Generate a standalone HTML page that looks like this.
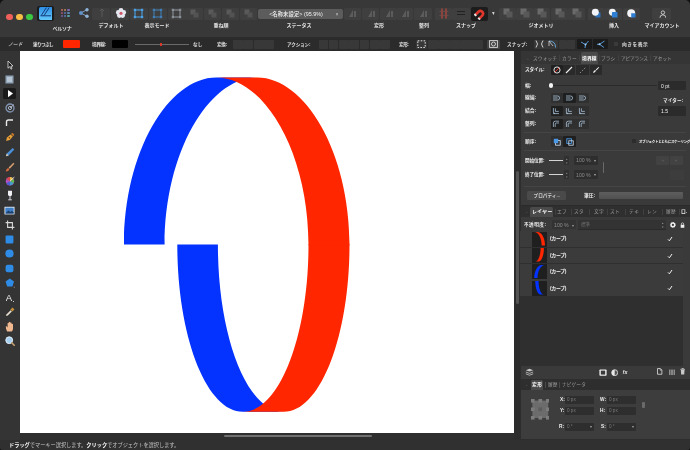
<!DOCTYPE html>
<html lang="ja"><head><meta charset="utf-8"><title>Affinity Designer</title>
<style>
html,body{margin:0;padding:0;background:#111;}
body{width:690px;height:450px;overflow:hidden;position:relative;font-family:"Liberation Sans","Noto Sans CJK JP",sans-serif;}
#app{position:absolute;left:0;top:0;width:690px;height:450px;overflow:hidden;border-radius:5px 5px 3px 3px;}
#app div,#app span,#app svg{position:absolute;display:block;white-space:nowrap;}
#app span{will-change:transform;}
</style></head><body><div id="app">
<div style="left:0px;top:0px;width:690px;height:450px;background:#2d2d2d;"></div>
<div style="left:0px;top:0px;width:690px;height:37px;background:#383838;border-radius:5px 5px 0 0;"></div>
<div style="left:0px;top:37px;width:690px;height:14.2px;background:#2b2b2b;"></div>
<div style="left:0px;top:51.2px;width:19.7px;height:389px;background:#343434;"></div>
<div style="left:19.7px;top:51.2px;width:494.7px;height:382px;background:#ffffff;"></div>
<div style="left:19.7px;top:433.2px;width:494.7px;height:6.3px;background:#2e2e2e;"></div>
<div style="left:224px;top:434.6px;width:148px;height:2.6px;background:#6e6e6e;border-radius:2px;"></div>
<div style="left:514.4px;top:51.2px;width:6.1px;height:388.3px;background:#2c2c2c;"></div>
<div style="left:516.4px;top:170.5px;width:3px;height:133.8px;background:#535353;border-radius:1.5px;"></div>
<div style="left:520.5px;top:51.2px;width:169.5px;height:388.3px;background:#3a3a3a;"></div>
<div style="left:0px;top:439.5px;width:690px;height:10.5px;background:#303030;"></div>
<svg style="left:0;top:0" width="690" height="450" viewBox="0 0 690 450"><path d="M177.30,244.60 C177.30,336.94 206.67,411.80 242.90,411.80 L283.50,411.80 C247.27,411.80 217.90,336.94 217.90,244.60 Z" fill="#0433ff"/><path d="M124.00,244.60 C124.00,152.26 168.28,77.40 216.25,77.40 L256.85,77.40 C208.88,77.40 164.60,152.26 164.60,244.60 Z" fill="#0433ff"/><path d="M308.50,244.60 C308.50,336.94 279.13,411.80 242.90,411.80 L283.90,411.80 C320.13,411.80 349.50,336.94 349.50,244.60 Z" fill="#ff2600"/><path d="M308.50,244.60 C308.50,152.26 264.22,77.40 216.25,77.40 L257.25,77.40 C305.22,77.40 349.50,152.26 349.50,244.60 Z" fill="#ff2600"/><rect x="308.5" y="244" width="41" height="1.2" fill="#ff2600"/></svg>
<div style="left:6.1000000000000005px;top:13.5px;width:6.6px;height:6.6px;background:#f0605a;border-radius:50%;"></div>
<div style="left:16.099999999999998px;top:13.5px;width:6.6px;height:6.6px;background:#f6be45;border-radius:50%;"></div>
<div style="left:26.0px;top:13.5px;width:6.6px;height:6.6px;background:#3cc845;border-radius:50%;"></div>
<div style="left:37px;top:5.6px;width:17.2px;height:15.8px;background:#1b1b1b;border-radius:2px;"></div>
<svg style="left:38.9px;top:6.9px" width="13.6" height="12.9" viewBox="0 0 13.6 12.9"><defs><linearGradient id="adg" x1="0" y1="0" x2="0" y2="1"><stop offset="0" stop-color="#2f8fe6"/><stop offset="1" stop-color="#62c8fa"/></linearGradient></defs><rect x="0" y="0" width="13.6" height="12.9" rx="1.6" fill="url(#adg)"/><path d="M2.2 8.6 L7.4 0.6 M5 8.6 L10.2 0.6 M1.6 8.8 H12" stroke="#123a78" stroke-width="1" fill="none"/></svg>
<div style="left:61px;top:8.6px;width:2.2px;height:2.2px;background:#c86a5a;border-radius:50%;"></div>
<div style="left:64.2px;top:8.6px;width:2.2px;height:2.2px;background:#b7895a;border-radius:50%;"></div>
<div style="left:67.4px;top:8.6px;width:2.2px;height:2.2px;background:#7b6bb0;border-radius:50%;"></div>
<div style="left:61px;top:11.8px;width:2.2px;height:2.2px;background:#a0557d;border-radius:50%;"></div>
<div style="left:64.2px;top:11.8px;width:2.2px;height:2.2px;background:#5d6fb5;border-radius:50%;"></div>
<div style="left:67.4px;top:11.8px;width:2.2px;height:2.2px;background:#5a8bb5;border-radius:50%;"></div>
<div style="left:61px;top:15.0px;width:2.2px;height:2.2px;background:#7a5aa5;border-radius:50%;"></div>
<div style="left:64.2px;top:15.0px;width:2.2px;height:2.2px;background:#5a7ab5;border-radius:50%;"></div>
<div style="left:67.4px;top:15.0px;width:2.2px;height:2.2px;background:#5aa0a5;border-radius:50%;"></div>
<svg style="left:78px;top:7px" width="12" height="12" viewBox="0 0 12 12"><path d="M3 6 L9 2.6 M3 6 L9 9.4" stroke="#7fa3c8" stroke-width="1"/><circle cx="3" cy="6" r="2" fill="#5f90c8"/><circle cx="9" cy="2.8" r="1.7" fill="#8fb4d8"/><circle cx="9" cy="9.2" r="1.7" fill="#8fb4d8"/></svg>
<span style="left:62.050000000000004px;top:24.60px;font-size:5.0px;line-height:7.00px;color:#e6e6e6;font-weight:700;transform:translateX(-50%);letter-spacing:-0.300px;">ペルソナ</span>
<div style="left:92px;top:7.6px;width:18.4px;height:12.2px;background:#3f3f3f;border-radius:1.5px;"></div>
<div style="left:111px;top:7.6px;width:18.4px;height:12.2px;background:#3f3f3f;border-radius:1.5px;"></div>
<svg style="left:96.5px;top:8px" width="10" height="10" viewBox="0 0 10 10"><path d="M5 1 V9 M3 3 L5 1 L7 3" stroke="#5a5a5a" stroke-width="1" fill="none"/></svg>
<svg style="left:114.5px;top:7px" width="12" height="12" viewBox="0 0 12 12"><g fill="#e6e9f2"><circle cx="6" cy="3.3" r="2.4"/><circle cx="3.3" cy="5.5" r="2.4"/><circle cx="8.7" cy="5.5" r="2.4"/><circle cx="4.4" cy="8.6" r="2.4"/><circle cx="7.6" cy="8.6" r="2.4"/></g><circle cx="6" cy="6.3" r="1.6" fill="#d05a6a"/></svg>
<span style="left:111px;top:22.00px;font-size:5.0px;line-height:7.00px;color:#e6e6e6;font-weight:700;transform:translateX(-50%);">デフォルト</span>
<div style="left:129.6px;top:7.6px;width:18.4px;height:12.2px;background:#3f3f3f;border-radius:1.5px;"></div>
<svg style="left:133.29999999999998px;top:7.5px" width="11" height="11" viewBox="0 0 11 11"><rect x="2" y="2" width="7" height="7" fill="none" stroke="#4aa3e8" stroke-width="1.1"/><g fill="#4aa3e8"><rect x="0.8" y="0.8" width="2.2" height="2.2"/><rect x="8" y="0.8" width="2.2" height="2.2"/><rect x="0.8" y="8" width="2.2" height="2.2"/><rect x="8" y="8" width="2.2" height="2.2"/></g></svg>
<div style="left:148.6px;top:7.6px;width:18.4px;height:12.2px;background:#3f3f3f;border-radius:1.5px;"></div>
<svg style="left:152.29999999999998px;top:7.5px" width="11" height="11" viewBox="0 0 11 11"><rect x="2" y="2" width="7" height="7" fill="none" stroke="#3f7fb5" stroke-width="1.1"/><g fill="#3f7fb5"><rect x="0.8" y="0.8" width="2.2" height="2.2"/><rect x="8" y="0.8" width="2.2" height="2.2"/><rect x="0.8" y="8" width="2.2" height="2.2"/><rect x="8" y="8" width="2.2" height="2.2"/></g></svg>
<div style="left:167.6px;top:7.6px;width:18.4px;height:12.2px;background:#3f3f3f;border-radius:1.5px;"></div>
<svg style="left:171.29999999999998px;top:7.5px" width="11" height="11" viewBox="0 0 11 11"><rect x="2" y="2" width="7" height="7" fill="none" stroke="#8a9098" stroke-width="1.1"/><g fill="#8a9098"><rect x="0.8" y="0.8" width="2.2" height="2.2"/><rect x="8" y="0.8" width="2.2" height="2.2"/><rect x="0.8" y="8" width="2.2" height="2.2"/><rect x="8" y="8" width="2.2" height="2.2"/></g></svg>
<span style="left:157px;top:22.00px;font-size:5.0px;line-height:7.00px;color:#e6e6e6;font-weight:700;transform:translateX(-50%);">表示モード</span>
<div style="left:186px;top:7.6px;width:17.2px;height:12.2px;background:#3f3f3f;border-radius:1.5px;"></div>
<svg style="left:190px;top:8.5px" width="9" height="9" viewBox="0 0 9 9"><rect x="0.5" y="0.5" width="5" height="5" fill="#5a5a5a"/><rect x="3.5" y="3.5" width="5" height="5" fill="#535353"/></svg>
<div style="left:204px;top:7.6px;width:17.2px;height:12.2px;background:#3f3f3f;border-radius:1.5px;"></div>
<svg style="left:208px;top:8.5px" width="9" height="9" viewBox="0 0 9 9"><rect x="0.5" y="0.5" width="5" height="5" fill="#5a5a5a"/><rect x="3.5" y="3.5" width="5" height="5" fill="#535353"/></svg>
<div style="left:222px;top:7.6px;width:17.2px;height:12.2px;background:#3f3f3f;border-radius:1.5px;"></div>
<svg style="left:226px;top:8.5px" width="9" height="9" viewBox="0 0 9 9"><rect x="0.5" y="0.5" width="5" height="5" fill="#5a5a5a"/><rect x="3.5" y="3.5" width="5" height="5" fill="#535353"/></svg>
<div style="left:239.5px;top:7.6px;width:17.2px;height:12.2px;background:#3f3f3f;border-radius:1.5px;"></div>
<svg style="left:243.5px;top:8.5px" width="9" height="9" viewBox="0 0 9 9"><rect x="0.5" y="0.5" width="5" height="5" fill="#5a5a5a"/><rect x="3.5" y="3.5" width="5" height="5" fill="#535353"/></svg>
<span style="left:220.6px;top:22.00px;font-size:5.0px;line-height:7.00px;color:#e6e6e6;font-weight:700;transform:translateX(-50%);">重ね順</span>
<div style="left:258px;top:9.4px;width:85px;height:9.4px;background:#5c5c5c;border-radius:2px;"></div>
<span style="left:296px;top:10.92px;font-size:5.4px;line-height:7.56px;color:#f2f2f2;font-weight:500;transform:translateX(-50%);">&lt;名称未設定&gt; (95.9%)</span>
<span style="left:337px;top:11.10px;font-size:5px;line-height:7.00px;color:#c8c8c8;font-weight:400;transform:translateX(-50%);">×</span>
<span style="left:299.4px;top:22.00px;font-size:5.0px;line-height:7.00px;color:#e6e6e6;font-weight:700;transform:translateX(-50%);">ステータス</span>
<div style="left:343.5px;top:7.6px;width:17.4px;height:12.2px;background:#3f3f3f;border-radius:1.5px;"></div>
<svg style="left:348.0px;top:8.5px" width="9" height="9" viewBox="0 0 9 9"><path d="M1 8 L5 1 L5 8 Z M6 2 H8 V8 H6Z" fill="#5c5c5c"/></svg>
<div style="left:362px;top:7.6px;width:17.4px;height:12.2px;background:#3f3f3f;border-radius:1.5px;"></div>
<svg style="left:366.5px;top:8.5px" width="9" height="9" viewBox="0 0 9 9"><path d="M1 8 L5 1 L5 8 Z M6 2 H8 V8 H6Z" fill="#5c5c5c"/></svg>
<div style="left:380px;top:7.6px;width:17.4px;height:12.2px;background:#3f3f3f;border-radius:1.5px;"></div>
<svg style="left:384.5px;top:8.5px" width="9" height="9" viewBox="0 0 9 9"><path d="M1 8 L5 1 L5 8 Z M6 2 H8 V8 H6Z" fill="#5c5c5c"/></svg>
<div style="left:396px;top:7.6px;width:17.4px;height:12.2px;background:#3f3f3f;border-radius:1.5px;"></div>
<svg style="left:400.5px;top:8.5px" width="9" height="9" viewBox="0 0 9 9"><path d="M1 8 L5 1 L5 8 Z M6 2 H8 V8 H6Z" fill="#5c5c5c"/></svg>
<div style="left:414px;top:7.6px;width:18.4px;height:12.2px;background:#3f3f3f;border-radius:1.5px;"></div>
<svg style="left:418.5px;top:8.5px" width="9" height="9" viewBox="0 0 9 9"><path d="M1 8 L5 1 L5 8 Z M6 2 H8 V8 H6Z" fill="#5c5c5c"/></svg>
<span style="left:378.6px;top:22.00px;font-size:5.0px;line-height:7.00px;color:#e6e6e6;font-weight:700;transform:translateX(-50%);">変形</span>
<span style="left:423.8px;top:22.00px;font-size:5.0px;line-height:7.00px;color:#e6e6e6;font-weight:700;transform:translateX(-50%);">整列</span>
<div style="left:434.5px;top:7.6px;width:17.4px;height:12.2px;background:#3f3f3f;border-radius:1.5px;"></div>
<div style="left:452px;top:7.6px;width:17.9px;height:12.2px;background:#3f3f3f;border-radius:1.5px;"></div>
<svg style="left:439px;top:7.6px" width="10" height="11" viewBox="0 0 10 11"><path d="M3 0.5 V10.5 M7 0.5 V10.5" stroke="#d9483b" stroke-width="1"/><path d="M0.5 3.5 H9.5 M0.5 7.5 H9.5" stroke="#7a4a45" stroke-width="0.8"/></svg>
<svg style="left:455.5px;top:9px" width="10" height="8" viewBox="0 0 10 8"><path d="M1 2.5 H9 M1 5.5 H9" stroke="#222" stroke-width="1.2"/></svg>
<div style="left:471.4px;top:7.2px;width:16.2px;height:13.6px;background:#1c1c1c;border-radius:2px;"></div>
<svg style="left:473.6px;top:7.8px" width="12" height="12" viewBox="0 0 13 13"><g transform="rotate(225 6.5 6.5)"><path d="M2.2 2 V7 A4.3 4.3 0 0 0 10.8 7 V2 H8 V7 A1.5 1.5 0 0 1 5 7 V2 Z" fill="#e0362c"/><rect x="2.2" y="1.2" width="2.8" height="2" fill="#e8e8e8"/><rect x="8" y="1.2" width="2.8" height="2" fill="#e8e8e8"/></g></svg>
<span style="left:492.6px;top:10.15px;font-size:5.5px;line-height:7.70px;color:#d0d0d0;font-weight:400;transform:translateX(-50%);">▾</span>
<span style="left:465.8px;top:22.00px;font-size:5.0px;line-height:7.00px;color:#e6e6e6;font-weight:700;transform:translateX(-50%);">スナップ</span>
<div style="left:498.5px;top:7.6px;width:17.0px;height:12.2px;background:#3f3f3f;border-radius:1.5px;"></div>
<svg style="left:502.5px;top:8.2px" width="10" height="10" viewBox="0 0 10 10"><rect x="0.5" y="0.5" width="6" height="6" fill="#6a6a6a"/><rect x="3.5" y="3.5" width="6" height="6" fill="#585858"/></svg>
<div style="left:516px;top:7.6px;width:17.0px;height:12.2px;background:#3f3f3f;border-radius:1.5px;"></div>
<svg style="left:520px;top:8.2px" width="10" height="10" viewBox="0 0 10 10"><rect x="0.5" y="0.5" width="6" height="6" fill="#6a6a6a"/><rect x="3.5" y="3.5" width="6" height="6" fill="#585858"/></svg>
<div style="left:533px;top:7.6px;width:17.0px;height:12.2px;background:#3f3f3f;border-radius:1.5px;"></div>
<svg style="left:537px;top:8.2px" width="10" height="10" viewBox="0 0 10 10"><rect x="0.5" y="0.5" width="6" height="6" fill="#6a6a6a"/><rect x="3.5" y="3.5" width="6" height="6" fill="#585858"/></svg>
<div style="left:550.5px;top:7.6px;width:17.0px;height:12.2px;background:#3f3f3f;border-radius:1.5px;"></div>
<svg style="left:554.5px;top:8.2px" width="10" height="10" viewBox="0 0 10 10"><rect x="0.5" y="0.5" width="6" height="6" fill="#6a6a6a"/><rect x="3.5" y="3.5" width="6" height="6" fill="#585858"/></svg>
<div style="left:568px;top:7.6px;width:17.0px;height:12.2px;background:#3f3f3f;border-radius:1.5px;"></div>
<svg style="left:572px;top:8.2px" width="10" height="10" viewBox="0 0 10 10"><rect x="0.5" y="0.5" width="6" height="6" fill="#6a6a6a"/><rect x="3.5" y="3.5" width="6" height="6" fill="#585858"/></svg>
<span style="left:541px;top:22.00px;font-size:5.0px;line-height:7.00px;color:#e6e6e6;font-weight:700;transform:translateX(-50%);">ジオメトリ</span>
<div style="left:587.5px;top:7.6px;width:17.0px;height:12.2px;background:#3f3f3f;border-radius:1.5px;"></div>
<svg style="left:590.9px;top:8.4px" width="10.4" height="10.4" viewBox="0 0 12 12"><rect x="5" y="5" width="6" height="6" rx="1" fill="#2f6fb5"/><circle cx="5" cy="5" r="4" fill="#f2f4f8"/></svg>
<div style="left:605px;top:7.6px;width:17.0px;height:12.2px;background:#3f3f3f;border-radius:1.5px;"></div>
<svg style="left:608.4px;top:8.4px" width="10.4" height="10.4" viewBox="0 0 12 12"><circle cx="5" cy="5" r="4" fill="#f2f4f8"/><rect x="4.5" y="4.5" width="6.5" height="6.5" rx="1" fill="#2f7fd5"/></svg>
<div style="left:622.5px;top:7.6px;width:17.0px;height:12.2px;background:#3f3f3f;border-radius:1.5px;"></div>
<svg style="left:625.9px;top:8.4px" width="10.4" height="10.4" viewBox="0 0 12 12"><circle cx="6" cy="6" r="4.6" fill="#f2f4f8"/><path d="M6 6 H11 V11 H6 Z" fill="#2f7fd5"/></svg>
<span style="left:613.8px;top:22.00px;font-size:5.0px;line-height:7.00px;color:#e6e6e6;font-weight:700;transform:translateX(-50%);">挿入</span>
<div style="left:652px;top:7.6px;width:19.4px;height:12.2px;background:#3f3f3f;border-radius:1.5px;"></div>
<svg style="left:658.6px;top:10px" width="7.8" height="8.6" viewBox="0 0 10 11"><circle cx="5" cy="3.3" r="2.2" fill="none" stroke="#e8e8e8" stroke-width="1"/><path d="M1.2 10 A3.8 3.8 0 0 1 8.8 10" fill="none" stroke="#e8e8e8" stroke-width="1"/></svg>
<span style="left:662px;top:22.00px;font-size:5.0px;line-height:7.00px;color:#e6e6e6;font-weight:700;transform:translateX(-50%);">マイアカウント</span>
<span style="left:8px;top:41.54px;font-size:4.8px;line-height:6.72px;color:#dcdcdc;font-weight:500;font-style:italic;letter-spacing:0.033px;">ノード</span>
<span style="left:33.3px;top:41.68px;font-size:4.6px;line-height:6.44px;color:#e0e0e0;font-weight:700;letter-spacing:-0.600px;">塗りつぶし</span>
<div style="left:62.8px;top:39.6px;width:17px;height:8.6px;background:#ff2600;border-radius:1px;"></div>
<span style="left:92px;top:41.68px;font-size:4.6px;line-height:6.44px;color:#e0e0e0;font-weight:700;letter-spacing:-0.419px;">境界線:</span>
<div style="left:111.7px;top:39.6px;width:16.2px;height:8.6px;background:#000000;border-radius:1px;"></div>
<div style="left:134.5px;top:43.6px;width:54px;height:1px;background:#6a6a6a;"></div>
<div style="left:160.2px;top:42.6px;width:1.4px;height:3px;background:#d9362b;"></div>
<span style="left:193px;top:41.68px;font-size:4.6px;line-height:6.44px;color:#e0e0e0;font-weight:700;letter-spacing:0.200px;">なし</span>
<span style="left:217px;top:41.68px;font-size:4.6px;line-height:6.44px;color:#e0e0e0;font-weight:700;letter-spacing:-0.259px;">変換:</span>
<div style="left:233px;top:39.6px;width:9.8px;height:9px;background:#383838;border-radius:1px;"></div>
<div style="left:243.4px;top:39.6px;width:9.8px;height:9px;background:#383838;border-radius:1px;"></div>
<div style="left:253.8px;top:39.6px;width:9.8px;height:9px;background:#383838;border-radius:1px;"></div>
<div style="left:264.2px;top:39.6px;width:9.8px;height:9px;background:#383838;border-radius:1px;"></div>
<span style="left:287px;top:41.68px;font-size:4.6px;line-height:6.44px;color:#e0e0e0;font-weight:700;letter-spacing:-0.163px;">アクション:</span>
<div style="left:318.5px;top:39.6px;width:9.7px;height:9px;background:#383838;border-radius:1px;"></div>
<div style="left:328.8px;top:39.6px;width:9.7px;height:9px;background:#383838;border-radius:1px;"></div>
<div style="left:339.1px;top:39.6px;width:9.7px;height:9px;background:#383838;border-radius:1px;"></div>
<div style="left:349.4px;top:39.6px;width:9.7px;height:9px;background:#383838;border-radius:1px;"></div>
<div style="left:359.7px;top:39.6px;width:9.7px;height:9px;background:#383838;border-radius:1px;"></div>
<div style="left:370px;top:39.6px;width:9.7px;height:9px;background:#383838;border-radius:1px;"></div>
<div style="left:380.3px;top:39.6px;width:9.7px;height:9px;background:#383838;border-radius:1px;"></div>
<span style="left:399.4px;top:41.68px;font-size:4.6px;line-height:6.44px;color:#e0e0e0;font-weight:700;letter-spacing:-0.425px;">変形:</span>
<div style="left:416.4px;top:39.6px;width:10.6px;height:9px;background:#383838;border-radius:1px;"></div>
<div style="left:428px;top:39.6px;width:10.6px;height:9px;background:#383838;border-radius:1px;"></div>
<div style="left:439px;top:39.6px;width:10.6px;height:9px;background:#383838;border-radius:1px;"></div>
<div style="left:450px;top:39.6px;width:10.6px;height:9px;background:#383838;border-radius:1px;"></div>
<div style="left:461px;top:39.6px;width:10.6px;height:9px;background:#383838;border-radius:1px;"></div>
<div style="left:472px;top:39.6px;width:10.6px;height:9px;background:#383838;border-radius:1px;"></div>
<svg style="left:417.4px;top:39.9px" width="9" height="8.4" viewBox="0 0 9 8.4"><rect x="0.8" y="0.8" width="7.4" height="6.8" fill="none" stroke="#e0e0e0" stroke-width="1" stroke-dasharray="1.6 1.3"/></svg>
<div style="left:487.4px;top:39.6px;width:12.4px;height:9px;background:#444;border-radius:1px;"></div>
<svg style="left:489.2px;top:40.2px" width="9" height="8" viewBox="0 0 9 8"><rect x="0.6" y="0.6" width="7.8" height="6.8" fill="none" stroke="#d8d8d8" stroke-width="0.9"/><circle cx="4.5" cy="4" r="2" fill="none" stroke="#d8d8d8" stroke-width="0.9"/></svg>
<span style="left:507.3px;top:41.68px;font-size:4.6px;line-height:6.44px;color:#e0e0e0;font-weight:700;letter-spacing:0.105px;">スナップ:</span>
<div style="left:533.5px;top:39.6px;width:12px;height:9px;background:#383838;border-radius:1px;"></div>
<div style="left:546px;top:39.6px;width:12px;height:9px;background:#383838;border-radius:1px;"></div>
<div style="left:558.5px;top:39.6px;width:8px;height:9px;background:#383838;border-radius:1px;"></div>
<div style="left:567px;top:39.6px;width:8px;height:9px;background:#383838;border-radius:1px;"></div>
<svg style="left:535px;top:40.4px" width="9" height="8" viewBox="0 0 9 8"><path d="M1 0.5 Q4 4 1 7.5 M8 0.5 Q5 4 8 7.5" fill="none" stroke="#e0e0e0" stroke-width="0.9"/></svg>
<svg style="left:548px;top:40.4px" width="9" height="8" viewBox="0 0 9 8"><path d="M1 1 Q7.5 1 7.5 7.5" fill="none" stroke="#6fb0e8" stroke-width="0.9"/><path d="M1 1 L5 6 M1 1 L1 6" stroke="#d0d0d0" stroke-width="0.8" fill="none"/></svg>
<div style="left:576.5px;top:39.2px;width:15.4px;height:9.8px;background:#1b1b1b;border-radius:1px;"></div>
<div style="left:592.6px;top:39.2px;width:15.4px;height:9.8px;background:#1b1b1b;border-radius:1px;"></div>
<svg style="left:579.5px;top:40px" width="10" height="8.5" viewBox="0 0 10 8.5"><path d="M1 2 L5.5 4.5 L8.5 1 M5.5 4.5 L5 8" fill="none" stroke="#5fa8ea" stroke-width="0.9"/><circle cx="5.5" cy="4.5" r="1" fill="#9fd0ff"/></svg>
<svg style="left:595.5px;top:40px" width="10" height="8.5" viewBox="0 0 10 8.5"><path d="M8.5 1 L3.5 4.3 L8 7.5 M3.5 4.3 L1 4.3" fill="none" stroke="#5fa8ea" stroke-width="0.9"/><circle cx="3.5" cy="4.3" r="1" fill="#9fd0ff"/></svg>
<div style="left:613.6px;top:42.2px;width:4px;height:4px;background:#3a3a3a;border-radius:0.8px;"></div>
<span style="left:622px;top:41.54px;font-size:4.8px;line-height:6.72px;color:#ededed;font-weight:500;letter-spacing:0.480px;">向きを表示</span>
<div style="left:3.4px;top:88.4px;width:12.4px;height:10.6px;background:#1a1a1a;border-radius:1.5px;"></div>
<svg style="left:5.60px;top:59.70px" width="8" height="10" viewBox="0 0 8 10"><path d="M2 1 L2 8.2 L3.8 6.6 L5 9.2 L6 8.7 L4.9 6.2 L7 6 Z" fill="#1c1c1c" stroke="#e2e2e2" stroke-width="0.8"/></svg>
<svg style="left:5.10px;top:74.75px" width="9" height="9" viewBox="0 0 9 9"><rect x="0.5" y="0.5" width="8" height="8" fill="#8fa3b8"/><rect x="2" y="2" width="5" height="5" fill="#b8c6d4"/></svg>
<svg style="left:5.90px;top:89.30px" width="8" height="9" viewBox="0 0 8 9"><path d="M2 1 L7 4.6 L2 8.2 Z" fill="#ffffff"/></svg>
<svg style="left:4.60px;top:103.35px" width="10" height="10" viewBox="0 0 10 10"><circle cx="5" cy="5" r="4" fill="none" stroke="#8496b4" stroke-width="1.3"/><circle cx="5" cy="5" r="1.6" fill="none" stroke="#a8b4c8" stroke-width="1"/><path d="M5 5 L9 1.5" stroke="#c8d0dc" stroke-width="0.8"/></svg>
<svg style="left:5.10px;top:118.40px" width="9" height="9" viewBox="0 0 9 9"><path d="M1.5 8 V4 Q1.5 2 3.5 2 H8" fill="none" stroke="#e8e8e8" stroke-width="1.4"/></svg>
<svg style="left:4.60px;top:132.45px" width="10" height="10" viewBox="0 0 10 10"><path d="M1 9 L2 5.4 L5.6 2.4 L7.8 4.6 L4.8 8 Z" fill="#e8a23a"/><path d="M6 2 L7.4 0.8 L9.4 2.8 L8.2 4.2 Z" fill="#c87a28"/><circle cx="4.4" cy="5.8" r="0.8" fill="#5a3a10"/></svg>
<svg style="left:4.60px;top:147.00px" width="10" height="10" viewBox="0 0 10 10"><path d="M1 9.2 L1.8 6.6 L7.6 0.9 L9.3 2.6 L3.6 8.4 Z" fill="#4a8fd8"/><path d="M1 9.2 L1.8 6.6 L3.6 8.4 Z" fill="#e8d0b0"/></svg>
<svg style="left:4.60px;top:161.55px" width="10" height="10" viewBox="0 0 10 10"><path d="M0.8 9.4 Q1 6.6 3.2 6 L4.4 7.2 Q3.8 9.4 0.8 9.4 Z" fill="#d86a3a"/><path d="M3.6 5.6 L8.4 0.8 L9.4 1.8 L4.8 6.8 Z" fill="#d8a070"/></svg>
<svg style="left:4.60px;top:176.10px" width="10" height="10" viewBox="0 0 10 10"><circle cx="5" cy="5.2" r="4.2" fill="#b050c0"/><path d="M5 5.2 L5 1 A4.2 4.2 0 0 1 8.6 3.1 Z" fill="#e8c040"/><path d="M5 5.2 L8.6 3.1 A4.2 4.2 0 0 1 8.6 7.3 Z" fill="#60b850"/><path d="M5 5.2 L8.6 7.3 A4.2 4.2 0 0 1 5 9.4 Z" fill="#40a0c8"/><path d="M5 5.2 L5 9.4 A4.2 4.2 0 0 1 1.4 7.3 Z" fill="#4860d0"/><path d="M5 5.2 L1.4 3.1 A4.2 4.2 0 0 1 5 1 Z" fill="#d84848"/><path d="M5 5.2 L9.4 0.8" stroke="#e8e8e8" stroke-width="0.8"/></svg>
<svg style="left:5.60px;top:190.15px" width="8" height="11" viewBox="0 0 8 11"><path d="M2 0.8 H6 V4.6 Q6 6.4 4 6.4 Q2 6.4 2 4.6 Z" fill="#f0f0f4"/><path d="M4 6.4 V9.6 M2.2 9.8 H5.8" stroke="#d8d8e0" stroke-width="1"/></svg>
<svg style="left:4.10px;top:205.70px" width="11" height="9" viewBox="0 0 11 9"><rect x="0.5" y="0.8" width="10" height="7.6" fill="#f0f4f8"/><rect x="1.3" y="1.6" width="8.4" height="6" fill="#3f7fc8"/><path d="M1.3 7.6 L4.4 4.4 L6.4 6 L8 4.8 L9.7 6.4 V7.6 Z" fill="#1c3f6a"/></svg>
<svg style="left:4.60px;top:219.75px" width="10" height="10" viewBox="0 0 10 10"><path d="M2.6 0.6 V7.4 H9.4 M0.6 2.6 H7.4 V9.4" fill="none" stroke="#d8d8d8" stroke-width="1.1"/></svg>
<svg style="left:5.10px;top:234.80px" width="9" height="9" viewBox="0 0 9 9"><rect x="0.6" y="0.6" width="7.8" height="7.8" rx="0.8" fill="#2f8ce6"/></svg>
<svg style="left:5.10px;top:249.35px" width="9" height="9" viewBox="0 0 9 9"><circle cx="4.5" cy="4.5" r="4.1" fill="#2f8ce6"/></svg>
<svg style="left:5.10px;top:263.90px" width="9" height="9" viewBox="0 0 9 9"><rect x="0.6" y="0.8" width="7.8" height="7.4" rx="2" fill="#2f8ce6"/></svg>
<svg style="left:4.60px;top:277.95px" width="10" height="10" viewBox="0 0 10 10"><path d="M4.8 0.6 L9 3.6 L7.4 8.6 H2.2 L0.6 3.6 Z" fill="#2f8ce6"/><path d="M8.4 9.6 L9.6 9.6 L9.6 8.4 Z" fill="#c8c8c8"/></svg>
<span style="left:9.2px;top:291.25px;font-size:9.5px;line-height:13.30px;color:#f0f0f0;font-weight:400;transform:translateX(-50%);font-family:"Liberation Serif",serif;">A</span>
<div style="left:13.2px;top:301.2px;width:1.2px;height:1.2px;background:#c8c8c8;"></div>
<svg style="left:4.60px;top:307.05px" width="10" height="10" viewBox="0 0 10 10"><path d="M1 9 L1.6 7.2 L5.6 3.2 L6.8 4.4 L2.8 8.4 Z" fill="#e8e0d0"/><path d="M5.4 2.6 L7.6 0.6 L9.4 2.4 L7.4 4.6 Z" fill="#c8923a"/></svg>
<svg style="left:4.60px;top:321.10px" width="10" height="11" viewBox="0 0 10 11"><path d="M2.2 10.4 Q0.6 7.4 0.8 5.4 L1.8 5.2 L2.6 6.6 V2.2 Q3.2 1.4 3.8 2.2 V1.2 Q4.5 0.4 5.2 1.2 V1.8 Q5.9 1.1 6.6 1.9 V3 Q7.4 2.4 8 3.2 V7.4 Q8 9.4 6.8 10.4 Z" fill="#f0b890"/></svg>
<svg style="left:4.60px;top:336.15px" width="10" height="10" viewBox="0 0 10 10"><circle cx="4.2" cy="4.2" r="3.4" fill="#a8d0f0" stroke="#e0ecf8" stroke-width="1"/><path d="M6.8 6.8 L9.2 9.2" stroke="#c8a070" stroke-width="1.6" stroke-linecap="round"/></svg>
<span style="left:9.2px;top:440.8px;font-size:5.2px;line-height:8px;color:#c4c4c4;"><b style="color:#ffffff">ドラッグ</b>でマーキー選択します。<b style="color:#ffffff">クリック</b>でオブジェクトを選択します。</span>
<div style="left:520.5px;top:51.2px;width:169.5px;height:12.6px;background:#353535;"></div>
<div style="left:580.5px;top:52.4px;width:17.2px;height:11.4px;background:#4a4a4a;border-radius:1.5px 1.5px 0 0;"></div>
<span style="left:526.5px;top:55.50px;font-size:5px;line-height:7.00px;color:#666;font-weight:400;">◦</span>
<span style="left:532.8px;top:55.71px;font-size:4.7px;line-height:6.58px;color:#9a9a9a;font-weight:400;letter-spacing:0.140px;">スウォッチ</span>
<span style="left:562px;top:55.71px;font-size:4.7px;line-height:6.58px;color:#9a9a9a;font-weight:400;letter-spacing:0.300px;">カラー</span>
<span style="left:581.6px;top:55.64px;font-size:4.8px;line-height:6.72px;color:#ffffff;font-weight:700;letter-spacing:0.133px;">境界線</span>
<span style="left:600.8px;top:55.71px;font-size:4.7px;line-height:6.58px;color:#9a9a9a;font-weight:400;letter-spacing:0.100px;">ブラシ</span>
<span style="left:621px;top:55.71px;font-size:4.7px;line-height:6.58px;color:#9a9a9a;font-weight:400;letter-spacing:-0.200px;">アピアランス</span>
<span style="left:653px;top:55.71px;font-size:4.7px;line-height:6.58px;color:#9a9a9a;font-weight:400;letter-spacing:0.050px;">アセット</span>
<div style="left:559.4px;top:55.4px;width:0.5px;height:6px;background:#404040;"></div>
<div style="left:578.6px;top:55.4px;width:0.5px;height:6px;background:#404040;"></div>
<div style="left:598.8px;top:55.4px;width:0.5px;height:6px;background:#404040;"></div>
<div style="left:618px;top:55.4px;width:0.5px;height:6px;background:#404040;"></div>
<div style="left:650.4px;top:55.4px;width:0.5px;height:6px;background:#404040;"></div>
<span style="left:524.6px;top:67.31px;font-size:4.7px;line-height:6.58px;color:#ececec;font-weight:700;letter-spacing:-0.206px;">スタイル:</span>
<div style="left:550.6px;top:64.6px;width:12.2px;height:10.8px;background:#202020;border-radius:1px;"></div>
<div style="left:563.2px;top:64.6px;width:12.2px;height:10.8px;background:#2a2a2a;border-radius:1px;"></div>
<div style="left:576.4px;top:64.6px;width:12.2px;height:10.8px;background:#2a2a2a;border-radius:1px;"></div>
<div style="left:589.8px;top:64.6px;width:12.2px;height:10.8px;background:#2a2a2a;border-radius:1px;"></div>
<svg style="left:552.6px;top:66px" width="8" height="8" viewBox="0 0 8 8"><circle cx="4" cy="4" r="3.1" fill="none" stroke="#f0f0f0" stroke-width="0.9"/><path d="M1.8 6.2 L6.2 1.8" stroke="#e0362c" stroke-width="1"/></svg>
<svg style="left:565.4px;top:66px" width="8" height="8" viewBox="0 0 8 8"><path d="M1 7 L7 1" stroke="#f0f0f0" stroke-width="1.1"/></svg>
<svg style="left:578.6px;top:66px" width="8" height="8" viewBox="0 0 8 8"><path d="M1 7 L7 1" stroke="#8a8a8a" stroke-width="1" stroke-dasharray="1.5 1.2"/></svg>
<svg style="left:592px;top:66px" width="8" height="8" viewBox="0 0 8 8"><path d="M1 7 Q1.5 4.6 3.2 4 L4 4.8 Q3.4 6.8 1 7 Z M3.8 3.6 L6.6 0.9 L7.2 1.5 L4.4 4.4Z" fill="#f0f0f0"/></svg>
<span style="left:525px;top:82.64px;font-size:4.8px;line-height:6.72px;color:#ececec;font-weight:700;">幅:</span>
<div style="left:551px;top:84.9px;width:106px;height:1px;background:#2a2a2a;"></div>
<div style="left:548.8px;top:83.2px;width:4.4px;height:4.4px;background:#f4f4f4;border-radius:50%;"></div>
<div style="left:658.4px;top:80.6px;width:27.2px;height:9.6px;background:#2b2b2b;border-radius:1px;"></div>
<span style="left:660.8px;top:82.50px;font-size:5px;line-height:7.00px;color:#f0f0f0;font-weight:400;">0 pt</span>
<span style="left:525px;top:95.14px;font-size:4.8px;line-height:6.72px;color:#ececec;font-weight:700;letter-spacing:-0.096px;">線端:</span>
<div style="left:550.6px;top:93px;width:12.2px;height:10px;background:#303030;border-radius:1px;"></div>
<svg style="left:552.4px;top:94px" width="8.6" height="8" viewBox="0 0 8.6 8"><path d="M1 2 H5.6 Q7.6 2 7.6 4 Q7.6 6 5.6 6 H1 M1 4 H5.6" fill="none" stroke="#b8d4ee" stroke-width="0.7"/></svg>
<div style="left:563.4px;top:93px;width:12.2px;height:10px;background:#1f1f1f;border-radius:1px;"></div>
<svg style="left:565.1999999999999px;top:94px" width="8.6" height="8" viewBox="0 0 8.6 8"><path d="M1 2 H5.6 Q7.6 2 7.6 4 Q7.6 6 5.6 6 H1 M1 4 H5.6" fill="none" stroke="#b8d4ee" stroke-width="0.7"/></svg>
<div style="left:576.4px;top:93px;width:12.2px;height:10px;background:#303030;border-radius:1px;"></div>
<svg style="left:578.1999999999999px;top:94px" width="8.6" height="8" viewBox="0 0 8.6 8"><path d="M1 2 H5.6 Q7.6 2 7.6 4 Q7.6 6 5.6 6 H1 M1 4 H5.6" fill="none" stroke="#b8d4ee" stroke-width="0.7"/></svg>
<span style="left:525px;top:107.84px;font-size:4.8px;line-height:6.72px;color:#ececec;font-weight:700;letter-spacing:-0.096px;">結合:</span>
<div style="left:550.6px;top:105.8px;width:12.2px;height:10px;background:#1f1f1f;border-radius:1px;"></div>
<svg style="left:552.4px;top:106.8px" width="8.6" height="8" viewBox="0 0 8.6 8"><path d="M1 6.6 H7 M1.4 1 V5 Q1.4 6.4 3 6.4 M3.4 1.4 V4.4 H6.8" fill="none" stroke="#b8d4ee" stroke-width="0.7"/></svg>
<div style="left:563.4px;top:105.8px;width:12.2px;height:10px;background:#303030;border-radius:1px;"></div>
<svg style="left:565.1999999999999px;top:106.8px" width="8.6" height="8" viewBox="0 0 8.6 8"><path d="M1 6.6 H7 M1.4 1 V5 Q1.4 6.4 3 6.4 M3.4 1.4 V4.4 H6.8" fill="none" stroke="#b8d4ee" stroke-width="0.7"/></svg>
<div style="left:576.4px;top:105.8px;width:12.2px;height:10px;background:#303030;border-radius:1px;"></div>
<svg style="left:578.1999999999999px;top:106.8px" width="8.6" height="8" viewBox="0 0 8.6 8"><path d="M1 6.6 H7 M1.4 1 V5 Q1.4 6.4 3 6.4 M3.4 1.4 V4.4 H6.8" fill="none" stroke="#b8d4ee" stroke-width="0.7"/></svg>
<span style="left:525px;top:120.84px;font-size:4.8px;line-height:6.72px;color:#ececec;font-weight:700;letter-spacing:-0.096px;">整列:</span>
<div style="left:550.6px;top:118.8px;width:12.2px;height:10px;background:#1f1f1f;border-radius:1px;"></div>
<svg style="left:552.4px;top:119.8px" width="8.6" height="8" viewBox="0 0 8.6 8"><path d="M1.4 7 V3 Q1.4 1.2 3.4 1.2 H7 M3.2 7 V4.2 Q3.2 3 4.4 3 H7" fill="none" stroke="#b8d4ee" stroke-width="0.7"/></svg>
<div style="left:563.4px;top:118.8px;width:12.2px;height:10px;background:#303030;border-radius:1px;"></div>
<svg style="left:565.1999999999999px;top:119.8px" width="8.6" height="8" viewBox="0 0 8.6 8"><path d="M1.4 7 V3 Q1.4 1.2 3.4 1.2 H7 M3.2 7 V4.2 Q3.2 3 4.4 3 H7" fill="none" stroke="#b8d4ee" stroke-width="0.7"/></svg>
<div style="left:576.4px;top:118.8px;width:12.2px;height:10px;background:#303030;border-radius:1px;"></div>
<svg style="left:578.1999999999999px;top:119.8px" width="8.6" height="8" viewBox="0 0 8.6 8"><path d="M1.4 7 V3 Q1.4 1.2 3.4 1.2 H7 M3.2 7 V4.2 Q3.2 3 4.4 3 H7" fill="none" stroke="#b8d4ee" stroke-width="0.7"/></svg>
<span style="left:662.7px;top:98.18px;font-size:4.6px;line-height:6.44px;color:#ececec;font-weight:700;letter-spacing:0.125px;">マイター:</span>
<div style="left:658.4px;top:106.2px;width:27.2px;height:9.4px;background:#2b2b2b;border-radius:1px;"></div>
<span style="left:660.8px;top:108.00px;font-size:5px;line-height:7.00px;color:#f0f0f0;font-weight:400;">1.5</span>
<div style="left:524px;top:132.4px;width:162px;height:0.6px;background:#454545;"></div>
<span style="left:525px;top:138.74px;font-size:4.8px;line-height:6.72px;color:#ececec;font-weight:700;letter-spacing:-0.096px;">順序:</span>
<div style="left:550.6px;top:136.4px;width:12.2px;height:10.2px;background:#303030;border-radius:1px;"></div>
<div style="left:563.4px;top:136.4px;width:12.6px;height:10.2px;background:#1f1f1f;border-radius:1px;"></div>
<svg style="left:552.8px;top:137.6px" width="8" height="8" viewBox="0 0 8 8"><rect x="2.6" y="2.6" width="4.6" height="4.6" fill="none" stroke="#cfe4f8" stroke-width="0.8"/><rect x="0.8" y="0.8" width="4.4" height="4.4" fill="#4a9ae8"/></svg>
<svg style="left:565.6px;top:137.6px" width="8" height="8" viewBox="0 0 8 8"><rect x="0.8" y="0.8" width="4.6" height="4.6" fill="none" stroke="#4a9ae8" stroke-width="0.9"/><rect x="2.8" y="2.8" width="4.4" height="4.4" fill="none" stroke="#cfe4f8" stroke-width="0.8"/></svg>
<div style="left:632px;top:139.2px;width:4px;height:4px;background:#2c2c2c;border-radius:0.8px;"></div>
<span style="left:638.8px;top:139.55px;font-size:3.5px;line-height:4.90px;color:#f2f2f2;font-weight:700;letter-spacing:-0.312px;">オブジェクトとともにスケーリング</span>
<div style="left:524px;top:150px;width:162px;height:0.6px;background:#454545;"></div>
<span style="left:525px;top:157.88px;font-size:4.6px;line-height:6.44px;color:#ececec;font-weight:700;letter-spacing:-0.115px;">開始位置:</span>
<div style="left:549px;top:160.2px;width:14px;height:0.7px;background:#d4d4d4;"></div>
<div style="left:564.4px;top:156.1px;width:4.6px;height:9px;background:#303030;border-radius:1px;"></div>
<span style="left:566.7px;top:156.72px;font-size:3.4px;line-height:4.76px;color:#8a8a8a;font-weight:400;transform:translateX(-50%);">▴</span>
<span style="left:566.7px;top:160.72px;font-size:3.4px;line-height:4.76px;color:#8a8a8a;font-weight:400;transform:translateX(-50%);">▾</span>
<div style="left:574px;top:155.9px;width:24.4px;height:9.2px;background:#2e2e2e;border-radius:1px;"></div>
<span style="left:576px;top:157.46px;font-size:5.2px;line-height:7.28px;color:#8c8c8c;font-weight:400;">100 %</span>
<span style="left:595px;top:158.30px;font-size:4px;line-height:5.60px;color:#a8a8a8;font-weight:400;transform:translateX(-50%);">▾</span>
<span style="left:525px;top:171.98px;font-size:4.6px;line-height:6.44px;color:#ececec;font-weight:700;letter-spacing:-0.115px;">終了位置:</span>
<div style="left:549px;top:174.29999999999998px;width:14px;height:0.7px;background:#d4d4d4;"></div>
<div style="left:564.4px;top:170.2px;width:4.6px;height:9px;background:#303030;border-radius:1px;"></div>
<span style="left:566.7px;top:170.82px;font-size:3.4px;line-height:4.76px;color:#8a8a8a;font-weight:400;transform:translateX(-50%);">▴</span>
<span style="left:566.7px;top:174.82px;font-size:3.4px;line-height:4.76px;color:#8a8a8a;font-weight:400;transform:translateX(-50%);">▾</span>
<div style="left:574px;top:170.0px;width:24.4px;height:9.2px;background:#2e2e2e;border-radius:1px;"></div>
<span style="left:576px;top:171.56px;font-size:5.2px;line-height:7.28px;color:#8c8c8c;font-weight:400;">100 %</span>
<span style="left:595px;top:172.40px;font-size:4px;line-height:5.60px;color:#a8a8a8;font-weight:400;transform:translateX(-50%);">▾</span>
<div style="left:602.8px;top:162.4px;width:1.6px;height:10.6px;background:#6a6a6a;border-radius:0.8px;"></div>
<div style="left:656px;top:155.6px;width:13.2px;height:9.4px;background:#424242;border-radius:1px;"></div>
<div style="left:669.8px;top:155.6px;width:13.2px;height:9.4px;background:#424242;border-radius:1px;"></div>
<span style="left:662.6px;top:157.40px;font-size:5px;line-height:7.00px;color:#5e5e5e;font-weight:400;transform:translateX(-50%);">+</span>
<span style="left:676.4px;top:157.40px;font-size:5px;line-height:7.00px;color:#5e5e5e;font-weight:400;transform:translateX(-50%);">+</span>
<div style="left:670px;top:169.6px;width:14px;height:10px;background:#3d3d3d;border-radius:1px;"></div>
<div style="left:524px;top:186px;width:162px;height:0.6px;background:#454545;"></div>
<div style="left:527px;top:191.4px;width:39.4px;height:8.8px;background:#4a4a4a;border-radius:1.5px;"></div>
<span style="left:546.7170000000001px;top:193.18px;font-size:4.6px;line-height:6.44px;color:#f0f0f0;font-weight:500;transform:translateX(-50%);letter-spacing:0.034px;">プロパティ...</span>
<span style="left:584px;top:193.04px;font-size:4.8px;line-height:6.72px;color:#ececec;font-weight:700;letter-spacing:-0.096px;">筆圧:</span>
<div style="left:599px;top:192px;width:84px;height:7.4px;background:linear-gradient(#5e5e5e,#505050);border-radius:1px;"></div>
<div style="left:520.5px;top:204.6px;width:169.5px;height:1px;background:#2a2a2a;"></div>
<div style="left:520.5px;top:205.6px;width:169.5px;height:11.4px;background:#2f2f2f;"></div>
<div style="left:530.4px;top:206.6px;width:23px;height:10.4px;background:#4a4a4a;border-radius:1.5px 1.5px 0 0;"></div>
<span style="left:525.5px;top:208.70px;font-size:5px;line-height:7.00px;color:#666;font-weight:400;">◦</span>
<span style="left:531.6px;top:208.84px;font-size:4.8px;line-height:6.72px;color:#ffffff;font-weight:700;letter-spacing:0.400px;">レイヤー</span>
<span style="left:557px;top:208.91px;font-size:4.7px;line-height:6.58px;color:#9a9a9a;font-weight:400;letter-spacing:0.300px;">エフ</span>
<span style="left:574px;top:208.91px;font-size:4.7px;line-height:6.58px;color:#9a9a9a;font-weight:400;letter-spacing:0.300px;">スタ</span>
<span style="left:594px;top:208.91px;font-size:4.7px;line-height:6.58px;color:#9a9a9a;font-weight:400;letter-spacing:0.300px;">文字</span>
<span style="left:610px;top:208.91px;font-size:4.7px;line-height:6.58px;color:#9a9a9a;font-weight:400;letter-spacing:0.300px;">スト</span>
<span style="left:629px;top:208.91px;font-size:4.7px;line-height:6.58px;color:#9a9a9a;font-weight:400;letter-spacing:0.550px;">テキ</span>
<span style="left:647px;top:208.91px;font-size:4.7px;line-height:6.58px;color:#9a9a9a;font-weight:400;letter-spacing:0.300px;">レン</span>
<span style="left:666px;top:208.91px;font-size:4.7px;line-height:6.58px;color:#9a9a9a;font-weight:400;letter-spacing:0.300px;">履歴</span>
<span style="left:681.4px;top:208.84px;font-size:4.8px;line-height:6.72px;color:#e8e8e8;font-weight:700;">ロ.</span>
<div style="left:555px;top:208.6px;width:0.5px;height:6px;background:#404040;"></div>
<div style="left:570.5px;top:208.6px;width:0.5px;height:6px;background:#404040;"></div>
<div style="left:589px;top:208.6px;width:0.5px;height:6px;background:#404040;"></div>
<div style="left:607px;top:208.6px;width:0.5px;height:6px;background:#404040;"></div>
<div style="left:624.5px;top:208.6px;width:0.5px;height:6px;background:#404040;"></div>
<div style="left:643px;top:208.6px;width:0.5px;height:6px;background:#404040;"></div>
<div style="left:661.5px;top:208.6px;width:0.5px;height:6px;background:#404040;"></div>
<div style="left:679px;top:208.6px;width:0.5px;height:6px;background:#404040;"></div>
<span style="left:524px;top:222.18px;font-size:4.6px;line-height:6.44px;color:#ececec;font-weight:700;letter-spacing:0.505px;">不透明度:</span>
<div style="left:552px;top:220.2px;width:24px;height:9.2px;background:#333333;border-radius:1px;"></div>
<span style="left:554px;top:221.76px;font-size:5.2px;line-height:7.28px;color:#8c8c8c;font-weight:400;">100 %</span>
<span style="left:573px;top:222.60px;font-size:4px;line-height:5.60px;color:#9a9a9a;font-weight:400;transform:translateX(-50%);">▾</span>
<div style="left:578.4px;top:220.2px;width:88px;height:9.2px;background:#333333;border-radius:1px;border-bottom:0.6px solid #2a2a2a;"></div>
<span style="left:580.8px;top:222.18px;font-size:4.6px;line-height:6.44px;color:#6e6e6e;font-weight:400;">標準</span>
<span style="left:662.8px;top:221.12px;font-size:3.4px;line-height:4.76px;color:#9a9a9a;font-weight:400;transform:translateX(-50%);">▴</span>
<span style="left:662.8px;top:224.92px;font-size:3.4px;line-height:4.76px;color:#9a9a9a;font-weight:400;transform:translateX(-50%);">▾</span>
<svg style="left:670.2px;top:222px" width="5.8" height="5.8" viewBox="0 0 7 7"><circle cx="3.5" cy="3.5" r="2.2" fill="none" stroke="#f0f0f0" stroke-width="1.7"/><circle cx="3.5" cy="3.5" r="3" fill="none" stroke="#f0f0f0" stroke-width="0.9" stroke-dasharray="1.1 1.25"/></svg>
<svg style="left:680.2px;top:221.6px" width="5" height="6.6" viewBox="0 0 6 8"><path d="M1.6 3.6 V2.4 Q1.6 1 3 1 Q4.4 1 4.4 2.4 V3.6" fill="none" stroke="#f0f0f0" stroke-width="0.8"/><rect x="0.8" y="3.4" width="4.4" height="3.6" fill="#f0f0f0"/></svg>
<div style="left:519.6px;top:230.6px;width:163px;height:135.6px;background:#2f2f2f;"></div>
<div style="left:519.6px;top:231.1px;width:163px;height:15.9px;background:#3b3b3b;"></div>
<div style="left:532.2px;top:231.5px;width:14.6px;height:15px;background:#1f1f1f;"></div>
<svg style="left:532.8000000000001px;top:232.0px" width="13.2" height="13.6" viewBox="216.25 77.4 133.3 167.2" preserveAspectRatio="xMidYMid meet"><path d="M308.50,244.60 C308.50,152.26 267.20,77.40 216.25,77.40 L257.25,77.40 C308.20,77.40 349.50,152.26 349.50,244.60 Z" fill="#ff2600"/></svg>
<span style="left:550.4px;top:236.27px;font-size:4.9px;line-height:6.86px;color:#f4f4f4;font-weight:700;letter-spacing:-0.318px;">(カーブ)</span>
<svg style="left:667.4px;top:236.1px" width="6" height="6" viewBox="0 0 6 6"><path d="M1 3.4 L2.4 4.8 L5 1" fill="none" stroke="#f4f4f4" stroke-width="1"/></svg>
<div style="left:519.6px;top:247.54999999999998px;width:163px;height:15.9px;background:#3b3b3b;"></div>
<div style="left:532.2px;top:247.95px;width:14.6px;height:15px;background:#1f1f1f;"></div>
<svg style="left:532.8000000000001px;top:248.45px" width="13.2" height="13.6" viewBox="242.9 244.6 106.6 167.2" preserveAspectRatio="xMidYMid meet"><path d="M308.50,244.60 C308.50,336.94 279.13,411.80 242.90,411.80 L283.90,411.80 C320.13,411.80 349.50,336.94 349.50,244.60 Z" fill="#ff2600"/></svg>
<span style="left:550.4px;top:252.72px;font-size:4.9px;line-height:6.86px;color:#f4f4f4;font-weight:700;letter-spacing:-0.318px;">(カーブ)</span>
<svg style="left:667.4px;top:252.5px" width="6" height="6" viewBox="0 0 6 6"><path d="M1 3.4 L2.4 4.8 L5 1" fill="none" stroke="#f4f4f4" stroke-width="1"/></svg>
<div style="left:519.6px;top:264.0px;width:163px;height:15.9px;background:#3b3b3b;"></div>
<div style="left:532.2px;top:264.4px;width:14.6px;height:15px;background:#1f1f1f;"></div>
<svg style="left:532.8000000000001px;top:264.9px" width="13.2" height="13.6" viewBox="124 77.4 132.9 167.2" preserveAspectRatio="xMidYMid meet"><path d="M124.00,244.60 C124.00,152.26 165.30,77.40 216.25,77.40 L256.85,77.40 C205.90,77.40 164.60,152.26 164.60,244.60 Z" fill="#0433ff"/></svg>
<span style="left:550.4px;top:269.17px;font-size:4.9px;line-height:6.86px;color:#f4f4f4;font-weight:700;letter-spacing:-0.318px;">(カーブ)</span>
<svg style="left:667.4px;top:269.0px" width="6" height="6" viewBox="0 0 6 6"><path d="M1 3.4 L2.4 4.8 L5 1" fill="none" stroke="#f4f4f4" stroke-width="1"/></svg>
<div style="left:519.6px;top:280.45px;width:163px;height:15.9px;background:#3b3b3b;"></div>
<div style="left:532.2px;top:280.84999999999997px;width:14.6px;height:15px;background:#1f1f1f;"></div>
<svg style="left:532.8000000000001px;top:281.34999999999997px" width="13.2" height="13.6" viewBox="177.3 244.6 106.2 167.2" preserveAspectRatio="xMidYMid meet"><path d="M177.30,244.60 C177.30,336.94 206.67,411.80 242.90,411.80 L283.50,411.80 C247.27,411.80 217.90,336.94 217.90,244.60 Z" fill="#0433ff"/></svg>
<span style="left:550.4px;top:285.62px;font-size:4.9px;line-height:6.86px;color:#f4f4f4;font-weight:700;letter-spacing:-0.318px;">(カーブ)</span>
<svg style="left:667.4px;top:285.4px" width="6" height="6" viewBox="0 0 6 6"><path d="M1 3.4 L2.4 4.8 L5 1" fill="none" stroke="#f4f4f4" stroke-width="1"/></svg>
<svg style="left:524.6px;top:368.4px" width="9" height="8" viewBox="0 0 9 8"><path d="M0.8 2.2 L4.5 0.8 L8.2 2.2 L4.5 3.6 Z" fill="#c8c8c8"/><path d="M0.8 4 L4.5 5.4 L8.2 4 M0.8 5.8 L4.5 7.2 L8.2 5.8" fill="none" stroke="#c8c8c8" stroke-width="0.8"/></svg>
<svg style="left:599.4px;top:368.79999999999995px" width="8" height="7.2" viewBox="0 0 8 7.2"><rect x="0.4" y="0.4" width="7.2" height="6.4" rx="0.8" fill="#f0f0f0"/><rect x="1.8" y="1.6" width="4.4" height="4" fill="#3a3a3a"/></svg>
<svg style="left:611px;top:368.79999999999995px" width="7.4" height="7.4" viewBox="0 0 7.4 7.4"><circle cx="3.7" cy="3.7" r="3" fill="#555" stroke="#e8e8e8" stroke-width="0.8"/><path d="M3.7 0.7 A3 3 0 0 0 3.7 6.7 Z" fill="#e8e8e8"/></svg>
<span style="left:624.8px;top:368.82px;font-size:5.4px;line-height:7.56px;color:#e8e8e8;font-weight:700;transform:translateX(-50%);font-family:"Liberation Serif",serif;"><i>fx</i></span>
<svg style="left:657.4px;top:368.4px" width="5.4" height="6.8" viewBox="0 0 6.4 8"><path d="M0.6 0.6 H4 L5.8 2.4 V7.4 H0.6 Z" fill="none" stroke="#e8e8e8" stroke-width="0.9"/><path d="M3.8 0.8 V2.6 H5.6" fill="none" stroke="#e8e8e8" stroke-width="0.7"/></svg>
<svg style="left:668.6px;top:368.59999999999997px" width="6" height="6.6" viewBox="0 0 7 7.6"><path d="M0.8 0.6 V7 M2.6 0.6 V7 M4.4 0.6 V7 M6.2 0.6 V7" stroke="#c0c0c0" stroke-width="0.9"/></svg>
<svg style="left:680px;top:368.4px" width="5.4" height="6.8" viewBox="0 0 6.4 8"><path d="M0.4 1.6 H6 M2.2 1.4 V0.6 H4.2 V1.4" fill="none" stroke="#e0e0e0" stroke-width="0.8"/><path d="M1 2.4 H5.4 L5 7.6 H1.4 Z" fill="#c8c8c8"/></svg>
<div style="left:520.5px;top:378.6px;width:169.5px;height:11.2px;background:#2e2e2e;"></div>
<div style="left:531.2px;top:380px;width:11.6px;height:9.8px;background:#4a4a4a;border-radius:1.5px 1.5px 0 0;"></div>
<span style="left:525.5px;top:381.90px;font-size:5px;line-height:7.00px;color:#666;font-weight:400;">◦</span>
<span style="left:531.8px;top:382.04px;font-size:4.8px;line-height:6.72px;color:#ffffff;font-weight:700;letter-spacing:0.400px;">変形</span>
<span style="left:547.5px;top:382.11px;font-size:4.7px;line-height:6.58px;color:#9a9a9a;font-weight:400;letter-spacing:0.100px;">履歴</span>
<span style="left:562px;top:382.11px;font-size:4.7px;line-height:6.58px;color:#9a9a9a;font-weight:400;letter-spacing:0.100px;">ナビゲータ</span>
<div style="left:544.8px;top:382px;width:0.5px;height:6px;background:#4a4a4a;"></div>
<div style="left:559.4px;top:382px;width:0.5px;height:6px;background:#4a4a4a;"></div>
<div style="left:520.5px;top:389.8px;width:169.5px;height:49.7px;background:#3d3d3d;"></div>
<svg style="left:530.6px;top:399px" width="18.6" height="20.6" viewBox="0 0 18.6 20.6"><rect x="1.4" y="1.6" width="15.8" height="17.4" fill="#6c6c6c"/><g fill="#7c7c7c"><rect x="0" y="0" width="3.6" height="3.6"/><rect x="7.5" y="0" width="3.6" height="3.6"/><rect x="15" y="0" width="3.6" height="3.6"/><rect x="0" y="8.5" width="3.6" height="3.6"/><rect x="15" y="8.5" width="3.6" height="3.6"/><rect x="0" y="17" width="3.6" height="3.6"/><rect x="7.5" y="17" width="3.6" height="3.6"/><rect x="15" y="17" width="3.6" height="3.6"/></g><rect x="7.5" y="8.5" width="3.6" height="3.6" fill="#5c5c5c"/></svg>
<span style="left:559.6px;top:397.24px;font-size:4.8px;line-height:6.72px;color:#f0f0f0;font-weight:700;">X:</span>
<div style="left:565px;top:395.8px;width:29.2px;height:8.4px;background:#2e2e2e;border-radius:1px;"></div>
<span style="left:567.2px;top:397.38px;font-size:4.6px;line-height:6.44px;color:#7c7c7c;font-weight:400;">0 px</span>
<span style="left:599.8px;top:397.24px;font-size:4.8px;line-height:6.72px;color:#f0f0f0;font-weight:700;">W:</span>
<div style="left:607px;top:395.8px;width:29.2px;height:8.4px;background:#2e2e2e;border-radius:1px;"></div>
<span style="left:609.2px;top:397.38px;font-size:4.6px;line-height:6.44px;color:#7c7c7c;font-weight:400;">0 px</span>
<span style="left:559.6px;top:408.14px;font-size:4.8px;line-height:6.72px;color:#f0f0f0;font-weight:700;">Y:</span>
<div style="left:565px;top:406.7px;width:29.2px;height:8.4px;background:#2e2e2e;border-radius:1px;"></div>
<span style="left:567.2px;top:408.28px;font-size:4.6px;line-height:6.44px;color:#7c7c7c;font-weight:400;">0 px</span>
<span style="left:600.4px;top:408.14px;font-size:4.8px;line-height:6.72px;color:#f0f0f0;font-weight:700;">H:</span>
<div style="left:607px;top:406.7px;width:29.2px;height:8.4px;background:#2e2e2e;border-radius:1px;"></div>
<span style="left:609.2px;top:408.28px;font-size:4.6px;line-height:6.44px;color:#7c7c7c;font-weight:400;">0 px</span>
<span style="left:559.4px;top:424.24px;font-size:4.8px;line-height:6.72px;color:#f0f0f0;font-weight:700;">R:</span>
<div style="left:565px;top:422.8px;width:29.2px;height:8.4px;background:#2e2e2e;border-radius:1px;"></div>
<span style="left:567.2px;top:424.38px;font-size:4.6px;line-height:6.44px;color:#7c7c7c;font-weight:400;">0 °</span>
<span style="left:591px;top:424.94px;font-size:3.8px;line-height:5.32px;color:#a0a0a0;font-weight:400;transform:translateX(-50%);">▾</span>
<span style="left:600.6px;top:424.24px;font-size:4.8px;line-height:6.72px;color:#f0f0f0;font-weight:700;">S:</span>
<div style="left:607px;top:422.8px;width:29.2px;height:8.4px;background:#2e2e2e;border-radius:1px;"></div>
<span style="left:609.2px;top:424.38px;font-size:4.6px;line-height:6.44px;color:#7c7c7c;font-weight:400;">0 °</span>
<span style="left:633px;top:424.94px;font-size:3.8px;line-height:5.32px;color:#a0a0a0;font-weight:400;transform:translateX(-50%);">▾</span>
<div style="left:642.4px;top:401.6px;width:2.4px;height:6.6px;background:#6a6a6a;border-radius:1px;"></div>
</div></body></html>
